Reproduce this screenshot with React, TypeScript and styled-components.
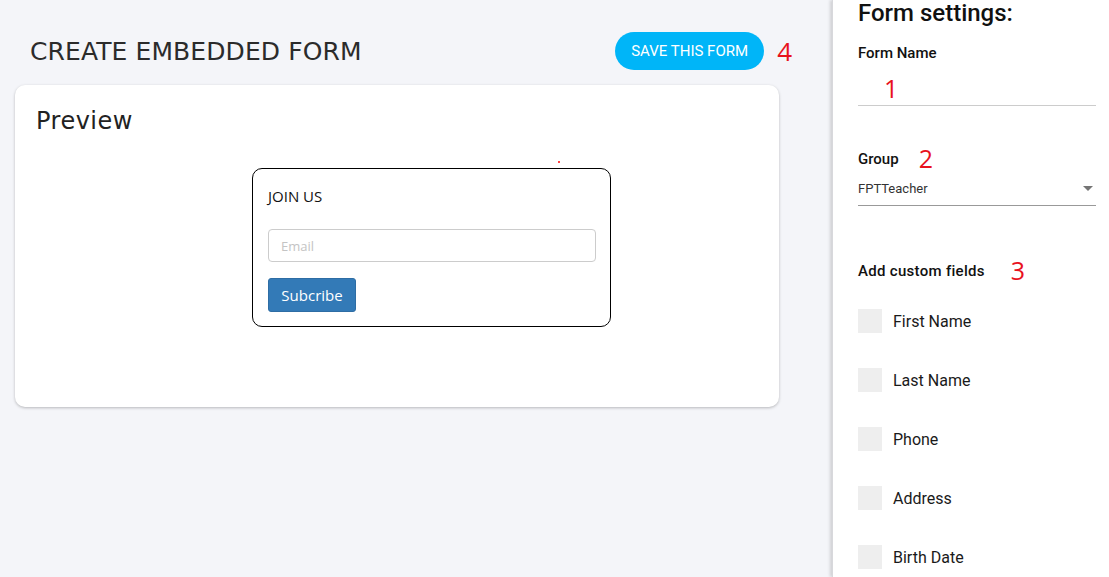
import React from 'react';
import styled, { createGlobalStyle } from 'styled-components';

const GlobalStyle = createGlobalStyle`
	html, body {
		margin: 0;
		padding: 0;
		background: #f4f5f9;
		overflow: hidden;
	}
	* {
		box-sizing: border-box;
	}
`;

const customFields = ['First Name', 'Last Name', 'Phone', 'Address', 'Birth Date'];

const App = () => {
	return (
		<>
			<GlobalStyle />
			<Layout>
				<Main>
					<Header>
						<PageTitle>CREATE EMBEDDED FORM</PageTitle>
						<HeaderActions>
							<SaveButton>Save this form</SaveButton>
							<Marker size={26}>4</Marker>
						</HeaderActions>
					</Header>
					<PreviewCard>
						<PreviewTitle>Preview</PreviewTitle>
						<Dot />
						<EmbedBox>
							<EmbedTitle>JOIN US</EmbedTitle>
							<EmailInput placeholder="Email" />
							<SubscribeButton>Subcribe</SubscribeButton>
						</EmbedBox>
					</PreviewCard>
				</Main>
				<Sidebar>
					<SidebarTitle>Form settings:</SidebarTitle>
					<FieldLabel>Form Name</FieldLabel>
					<NameInputRow>
						<Marker size={25}>1</Marker>
					</NameInputRow>
					<LabelRow>
						<FieldLabel>Group</FieldLabel>
						<Marker size={25}>2</Marker>
					</LabelRow>
					<SelectRow>
						<SelectValue>FPTTeacher</SelectValue>
						<Caret />
					</SelectRow>
					<LabelRow $gap={26} $top={52}>
						<FieldLabel $wide>Add custom fields</FieldLabel>
						<Marker size={25}>3</Marker>
					</LabelRow>
					<CheckList>
						{customFields.map((f) => (
							<CheckRow key={f}>
								<CheckBox />
								<CheckLabel>{f}</CheckLabel>
							</CheckRow>
						))}
					</CheckList>
				</Sidebar>
			</Layout>
		</>
	);
};

const Layout = styled.div`
	display: flex;
	height: 577px;
	width: 1109px;
`;

const Main = styled.div`
	flex: 1;
	padding: 32px 0 0 15px;
`;

const Header = styled.div`
	display: flex;
	align-items: center;
	justify-content: space-between;
	width: 777px;
	padding-left: 15px;
	height: 38px;
`;

const PageTitle = styled.h1`
	margin: 0;
	font-family: 'DejaVu Sans', sans-serif;
	font-weight: 400;
	font-size: 25px;
	letter-spacing: 0.1px;
	color: #2b2b2b;
`;

const HeaderActions = styled.div`
	display: flex;
	align-items: center;
	gap: 13px;
`;

const SaveButton = styled.button`
	height: 38px;
	width: 149px;
	border: none;
	border-radius: 19px;
	background: #00b5f8;
	color: #fff;
	font-family: Roboto, sans-serif;
	font-size: 15px;
	text-transform: uppercase;
	padding: 0;
`;

const Marker = styled.span<{ size: number }>`
	font-family: 'Open Sans', sans-serif;
	font-size: ${(p) => p.size}px;
	line-height: 1;
	color: #e8121d;
`;

const PreviewCard = styled.div`
	position: relative;
	margin-top: 15px;
	width: 764px;
	height: 322px;
	background: #fff;
	border-radius: 10px;
	box-shadow: 0 1px 3px rgba(0, 0, 0, 0.25);
	padding: 22px 21px;
`;

const PreviewTitle = styled.h2`
	margin: 0;
	font-family: 'DejaVu Sans', sans-serif;
	font-weight: 400;
	font-size: 24px;
	letter-spacing: 0.5px;
	color: #222;
`;

const Dot = styled.span`
	position: absolute;
	left: 543px;
	top: 76px;
	width: 2px;
	height: 2px;
	background: #f44;
`;

const EmbedBox = styled.div`
	margin: 33px 0 0 216px;
	width: 359px;
	height: 159px;
	border: 1px solid #000;
	border-radius: 10px;
	padding: 17px 15px;
`;

const EmbedTitle = styled.div`
	font-family: 'Open Sans', sans-serif;
	font-size: 15px;
	color: #111;
	line-height: 20px;
`;

const EmailInput = styled.input`
	display: block;
	margin-top: 23px;
	width: 328px;
	height: 33px;
	border: 1px solid #ccc;
	border-radius: 4px;
	padding: 0 12px;
	font-family: 'Open Sans', sans-serif;
	font-size: 13px;
	&::placeholder {
		color: #c4c4c4;
	}
`;

const SubscribeButton = styled.button`
	display: block;
	margin-top: 16px;
	width: 88px;
	height: 34px;
	border: 1px solid #2e6da4;
	border-radius: 3px;
	background: #337ab7;
	color: #fff;
	font-family: 'Open Sans', sans-serif;
	font-size: 15px;
	padding: 0;
`;

const Sidebar = styled.div`
	width: 277px;
	background: #fff;
	box-shadow: -2px 0 3px rgba(0, 0, 0, 0.15);
	border-left: 1px solid #d8d8dc;
	padding: 0 13px 0 25px;
	font-family: Roboto, sans-serif;
`;

const SidebarTitle = styled.div`
	font-size: 24px;
	font-weight: 500;
	color: #111;
	line-height: 24px;
	margin-top: 1px;
`;

const FieldLabel = styled.div<{ $wide?: boolean }>`
	font-size: 15px;
	font-weight: 500;
	color: #111;
	line-height: 16px;
	margin-top: 20px;
	letter-spacing: ${(p) => (p.$wide ? '0.3px' : '0')};
`;

const LabelRow = styled.div<{ $gap?: number; $top?: number }>`
	display: flex;
	align-items: center;
	height: 25px;
	gap: ${(p) => p.$gap ?? 20}px;
	margin-top: ${(p) => p.$top ?? 40}px;
	${FieldLabel} {
		margin-top: 0;
	}
`;

const NameInputRow = styled.div`
	height: 45px;
	border-bottom: 1px solid #ccc;
	padding: 15px 0 0 26px;
`;

const SelectRow = styled.div`
	display: flex;
	align-items: center;
	justify-content: space-between;
	height: 35px;
	border-bottom: 1px solid #999;
	padding-right: 3px;
`;

const SelectValue = styled.span`
	font-size: 13px;
	color: #333;
`;

const Caret = styled.span`
	width: 0;
	height: 0;
	border-left: 5px solid transparent;
	border-right: 5px solid transparent;
	border-top: 5px solid #757575;
`;

const CheckList = styled.div`
	display: flex;
	flex-direction: column;
	gap: 35px;
	margin-top: 26px;
`;

const CheckRow = styled.div`
	display: flex;
	align-items: center;
	gap: 11px;
`;

const CheckBox = styled.span`
	width: 24px;
	height: 24px;
	background: #eee;
`;

const CheckLabel = styled.span`
	font-size: 16px;
	color: #1a1a1a;
`;

export default App;
